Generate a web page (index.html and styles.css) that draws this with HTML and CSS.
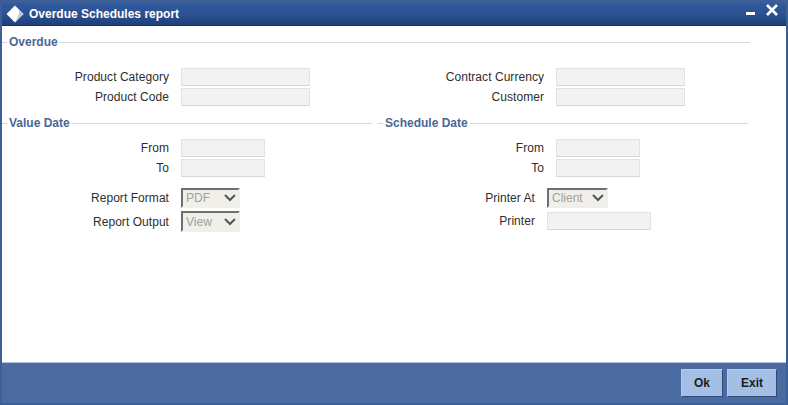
FILE: index.html
```html
<!DOCTYPE html>
<html lang="en">
<head>
    <meta charset="UTF-8">
    <title>Overdue Schedules report</title>
    <meta name="viewport" content="width=device-width, initial-scale=1.0">
    <link rel="stylesheet" href="styles.css">
</head>
<body>
<div class="window">
    <header class="title-bar">
        <svg class="title-icon" width="18" height="18" viewBox="0 0 18 18"><path d="M9 0.5 L17.5 9 L9 17.5 L0.5 9 Z" fill="#fff"/><path d="M13 5 L17.5 9 L9 17.5 L13 9 Z" fill="#b9c7de"/></svg>
        <span class="title-text">Overdue Schedules report</span>
        <svg class="win-btn" width="38" height="16" viewBox="0 0 38 16"><path d="M0 9 H9 V12 H0 Z" fill="#fff"/><path d="M21 2 L31 12 M31 2 L21 12" stroke="#fff" stroke-width="2.6" fill="none"/></svg>
    </header>
    <main class="content">
        <div class="legend legend-full"><span>Overdue</span></div>
        <div class="two-col top-fields">
            <div class="rows wide">
                <label>Product Category</label><input type="text" disabled>
                <label>Product Code</label><input type="text" disabled>
            </div>
            <div class="rows wide">
                <label>Contract Currency</label><input type="text" disabled>
                <label>Customer</label><input type="text" disabled>
            </div>
        </div>
        <div class="legend-pair">
            <div class="legend"><span>Value Date</span></div>
            <div class="legend"><span>Schedule Date</span></div>
        </div>
        <div class="two-col date-fields">
            <div class="rows narrow">
                <label>From</label><input type="text" disabled>
                <label>To</label><input type="text" disabled>
            </div>
            <div class="rows narrow">
                <label>From</label><input type="text" disabled>
                <label>To</label><input type="text" disabled>
            </div>
        </div>
        <div class="two-col report-fields">
            <div class="rows selects">
                <label>Report Format</label><div class="fake-select">PDF<svg width="12" height="8" viewBox="0 0 12 8"><path d="M1 1 L6 6 L11 1" stroke="#555" stroke-width="2" fill="none"/></svg></div>
                <label>Report Output</label><div class="fake-select tall">View<svg width="12" height="8" viewBox="0 0 12 8"><path d="M1 1 L6 6 L11 1" stroke="#555" stroke-width="2" fill="none"/></svg></div>
            </div>
            <div class="rows printer">
                <label>Printer At</label><div class="fake-select client">Client<svg width="12" height="8" viewBox="0 0 12 8"><path d="M1 1 L6 6 L11 1" stroke="#555" stroke-width="2" fill="none"/></svg></div>
                <label>Printer</label><input type="text" disabled>
            </div>
        </div>
    </main>
    <footer class="button-bar">
        <button type="button" class="ok-btn">Ok</button>
        <button type="button" class="exit-btn">Exit</button>
    </footer>
</div>
</body>
</html>
```

FILE: styles.css
```css
* { box-sizing: border-box; }
html, body { margin: 0; height: 405px; overflow: hidden; }
body { font-family: 'Liberation Sans', Arial, sans-serif; font-size: 12px; color: #333; }
.window { height: 405px; display: flex; flex-direction: column; background: #3d5f98; padding: 3px 2px 2px 2px; }

/* Title bar */
.title-bar { height: 23px; flex: none; display: flex; align-items: center; padding-left: 4px;
    background: linear-gradient(#305a9e 0%, #2a5090 55%, #1f3f78 100%); border-bottom: 1px solid #16305e;
}
.title-text { margin-left: 5px; color: #fff; font-weight: bold; font-size: 12px; }
.title-icon { flex: none; }
.win-btn { margin-left: auto; margin-right: 2px; margin-top: -6px; }

/* Form area */
.content { flex: 1; background: #fff; border-bottom: 1px solid #b5c3dc; padding-top: 9px; }
.legend { display: flex; align-items: center; height: 14px; color: #4a6796; font-weight: bold; }
.legend::before { content: ""; width: 5px; height: 1px; background: #cdd8e2; margin-right: 2px; }
.legend::after { content: ""; flex: 1; height: 1px; background: #cdd8e2; margin-left: 2px; }
.legend-full { margin-right: 36px; }
.legend-pair { display: grid; grid-template-columns: 370px 376px; margin-top: 10px; }
.legend-pair .legend + .legend::before { margin-left: 6px; }
.two-col { display: grid; grid-template-columns: 375px 375px; }
.top-fields { margin-top: 19px; }
.date-fields { margin-top: 9px; }
.report-fields { margin-top: 11px; }
.rows { display: grid; grid-template-columns: 167px auto; column-gap: 12px; row-gap: 2px; justify-content: start; align-items: center; align-content: start; }
.rows label { text-align: right; letter-spacing: 0.05px; color: #2e2e2e; }
.rows input { height: 18px; padding: 0; background: #f2f2f2; border: 1px solid #e2e2e2; border-bottom-color: #d6d6d6; }
.wide input { width: 129px; }
.narrow input { width: 84px; }

.fake-select { width: 59px; height: 20px; display: flex; align-items: center; justify-content: space-between; padding: 0 2px 0 3px;
    background: #f1efe9; color: #a0a0a0; border: 2px solid #f1efe9; border-top-color: #6f6f6f; border-left-color: #6f6f6f;
}
.selects { row-gap: 3px; }
.tall { height: 21px; }
.printer { grid-template-columns: 158px auto; row-gap: 4px; }
.client { width: 61px; }
.printer input { width: 104px; }

/* Bottom buttons */
.button-bar { height: 40px; flex: none; display: flex; justify-content: flex-end; align-items: center; gap: 4px; padding-right: 9px; background: #4a6aa0; }
.button-bar button { height: 28px; background: #a3bfe3; font-family: inherit; font-size: 12px; font-weight: bold; color: #1c1c1c;
    border: 1px solid #b6cdea; border-right-color: #2f4a78; border-bottom-color: #2f4a78; padding: 0;
}
.ok-btn { width: 42px; }
.exit-btn { width: 50px; }
```
